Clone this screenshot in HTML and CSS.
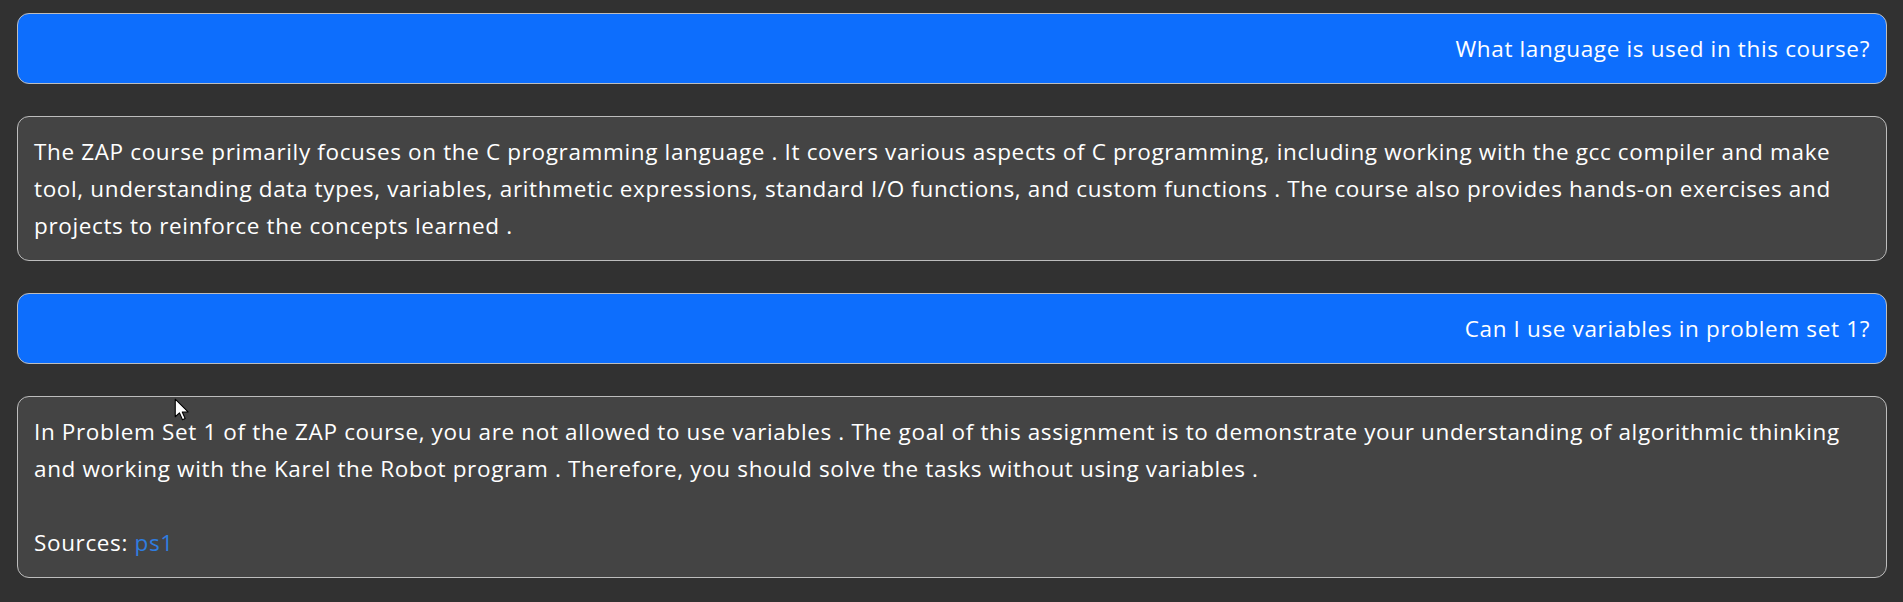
FILE: index.html
```html
<!DOCTYPE html>
<html lang="en">
<head>
<meta charset="utf-8">
<title>Chat</title>
<link rel="stylesheet" href="styles.css">
</head>
<body>
<main class="chat">
  <div class="msg msg-user">What language is used in this course?</div>
  <div class="msg msg-bot">The ZAP course primarily focuses on the C programming language . It covers various aspects of C programming, including working with the gcc compiler and make tool, understanding data types, variables, arithmetic expressions, standard I/O functions, and custom functions . The course also provides hands-on exercises and projects to reinforce the concepts learned .</div>
  <div class="msg msg-user">Can I use variables in problem set 1?</div>
  <div class="msg msg-bot">In Problem Set 1 of the ZAP course, you are not allowed to use variables . The goal of this assignment is to demonstrate your understanding of algorithmic thinking and working with the Karel the Robot program . Therefore, you should solve the tasks without using variables .<br><br>Sources: <a class="source" href="#">ps1</a></div>
</main>
<svg class="cursor" width="17" height="23" viewBox="0 0 14 19" aria-hidden="true">
  <path d="M1 1 L1 15.5 L4.5 12.3 L7 18 L9.2 17 L6.8 11.5 L11.6 11.5 Z" fill="#ffffff" stroke="#000000" stroke-width="0.9" stroke-linejoin="round"/>
</svg>
</body>
</html>
```
FILE: styles.css
```css
html, body {
  margin: 0;
  padding: 0;
  background: #313131;
}
body {
  position: relative;
  font-family: "Open Sans", "Noto Sans", sans-serif;
  font-size: 22.5px;
  letter-spacing: 0.64px;
  line-height: 37px;
  color: #ffffff;
}
.chat {
  display: flex;
  flex-direction: column;
  gap: 32px;
  padding: 13px 16px 20px 17px;
}
.msg {
  border: 1px solid #bdbdbd;
  border-radius: 12px;
  padding: 16px;
}
.msg-user {
  background: #0d6efd;
  text-align: right;
}
.msg-bot {
  background: #444444;
  text-align: left;
}
.source {
  color: #2f7de0;
  text-decoration: none;
}
.cursor {
  position: absolute;
  left: 174px;
  top: 398px;
}
```
